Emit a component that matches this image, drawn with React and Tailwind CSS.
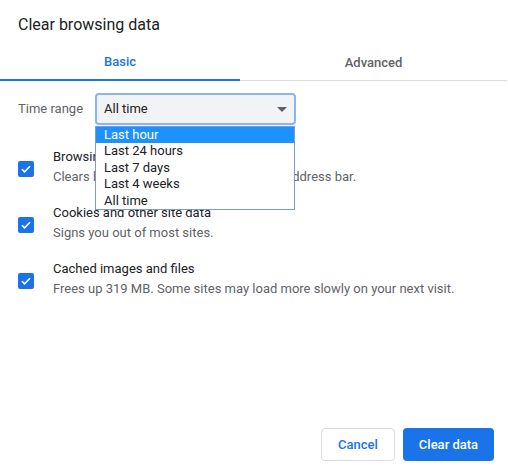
const Check = () => (
  <div className="w-4 h-4 rounded-[2px] bg-[#1a73e8] flex items-center justify-center shrink-0 mt-[3px]">
    <svg width="12" height="12" viewBox="0 0 24 24" fill="none" stroke="white" strokeWidth="3.2">
      <path d="M4 12.5l5 5L20 6.5" />
    </svg>
  </div>
);

function Item({ title, desc }) {
  return (
    <div className="flex items-center gap-[19px] pl-[18px]">
      <Check />
      <div className="text-[13px] leading-[20px]">
        <div className="text-[#202124]">{title}</div>
        <div className="text-[#5f6368]">{desc}</div>
      </div>
    </div>
  );
}

export default function App() {
  const opts = ["Last hour", "Last 24 hours", "Last 7 days", "Last 4 weeks", "All time"];
  return (
    <div className="w-[508px] h-[474px] bg-white relative" style={{ fontFamily: "Roboto, 'Liberation Sans', sans-serif" }}>
      <div className="pt-[13px] pl-[18px] text-[16px] text-[#202124] h-[45px]">Clear browsing data</div>
      <div className="flex h-[36px] border-b border-[#dadce0] mr-[1px]">
        <div className="w-[240px] flex items-center justify-center text-[13px] font-medium text-[#1a73e8] border-b-2 border-[#1a73e8] -mb-px">Basic</div>
        <div className="flex-1 flex items-center justify-center text-[13px] font-medium text-[#5f6368]">Advanced</div>
      </div>
      <div className="flex items-center mt-[12px] pl-[18px] h-[32px]">
        <span className="text-[13px] text-[#5f6368] w-[77px]">Time range</span>
        <div className="w-[201px] h-[32px] bg-[#f1f3f4] border-2 border-[#8ab4f8] rounded-[4px] flex items-center justify-between px-[7px] text-[13px] text-[#202124]">
          <span>All time</span>
          <svg width="10" height="5" viewBox="0 0 10 5"><path d="M0 0h10L5 5z" fill="#5f6368" /></svg>
        </div>
      </div>
      <div className="flex flex-col gap-[16px] mt-[22px]">
        <Item title="Browsing history" desc="Clears history and autocompletes in the address bar." />
        <Item title="Cookies and other site data" desc="Signs you out of most sites." />
        <Item title="Cached images and files" desc="Frees up 319 MB. Some sites may load more slowly on your next visit." />
      </div>
      <div className="absolute left-[95px] top-[126px] w-[200px] bg-white border border-[#7a9cd3] text-[13px] leading-[16.4px] text-[#202124]">
        {opts.map((o, i) => (
          <div key={o} className={i === 0 ? "bg-[#1e90ff] text-white px-[8px]" : "px-[8px]"}>{o}</div>
        ))}
      </div>
      <div className="absolute right-[14px] bottom-[13px] flex gap-[8px]">
        <button className="w-[74px] h-[33px] border border-[#dadce0] rounded-[4px] text-[13px] font-medium text-[#1a73e8]">Cancel</button>
        <button className="w-[91px] h-[33px] bg-[#1a73e8] rounded-[4px] text-[13px] font-medium text-white">Clear data</button>
      </div>
    </div>
  );
}
